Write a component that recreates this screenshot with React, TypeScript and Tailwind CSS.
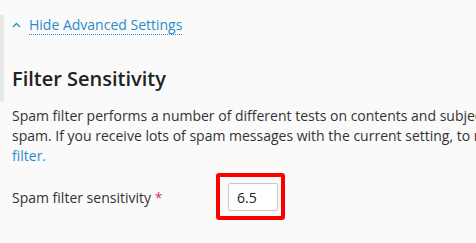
import { FC } from "react";

const ChevronUp: FC = () => (
  <svg width="9" height="6" viewBox="0 0 9 6" fill="none" aria-hidden>
    <path d="M1 5L4.5 1.5L8 5" stroke="#2a8cc8" strokeWidth="1.3" />
  </svg>
);

const App: FC = () => {
  return (
    <div
      className="relative h-[243px] w-[476px] overflow-hidden bg-[#fafafa] text-[#333]"
      style={{ fontFamily: '"Open Sans", sans-serif' }}
    >
      <div className="mt-[15px] h-[87px] rounded-bl-[3px] border-l-4 border-[#e8e8e8] pl-2">
        <a href="#" className="flex items-center gap-2 text-[14px] leading-[19px] text-[#2a8cc8]">
          <ChevronUp />
          <span className="border-b border-dotted border-[#2a8cc8]">Hide Advanced Settings</span>
        </a>
        <h2 className="mt-[30px] text-[20px] font-semibold leading-[28px] text-[#222]">
          Filter Sensitivity
        </h2>
      </div>
      <p className="mt-[4px] whitespace-nowrap pl-3 text-[14px] leading-[20px]">
        Spam filter performs a number of different tests on contents and subject line of each message.
        <br />
        spam. If you receive lots of spam messages with the current setting, to make it more sensitive, lower the value of the
        <br />
        <a href="#" className="text-[#2a8cc8]">filter.</a>
      </p>
      <div className="mt-[17px] flex items-center pl-3">
        <label className="w-[216px] text-[14px]">
          Spam filter sensitivity <span className="text-[#d9346b]">*</span>
        </label>
        <div className="relative">
          <input
            defaultValue="6.5"
            className="h-[28px] w-[50px] rounded-[2px] border border-[#c8c8c8] bg-white px-2 text-[14px] text-[#222] outline-none"
          />
          <div className="pointer-events-none absolute -left-[12px] -right-[7px] -top-[10px] -bottom-[9px] rounded-[3px] border-4 border-[#ff0000]" />
        </div>
      </div>
    </div>
  );
};

export default App;
